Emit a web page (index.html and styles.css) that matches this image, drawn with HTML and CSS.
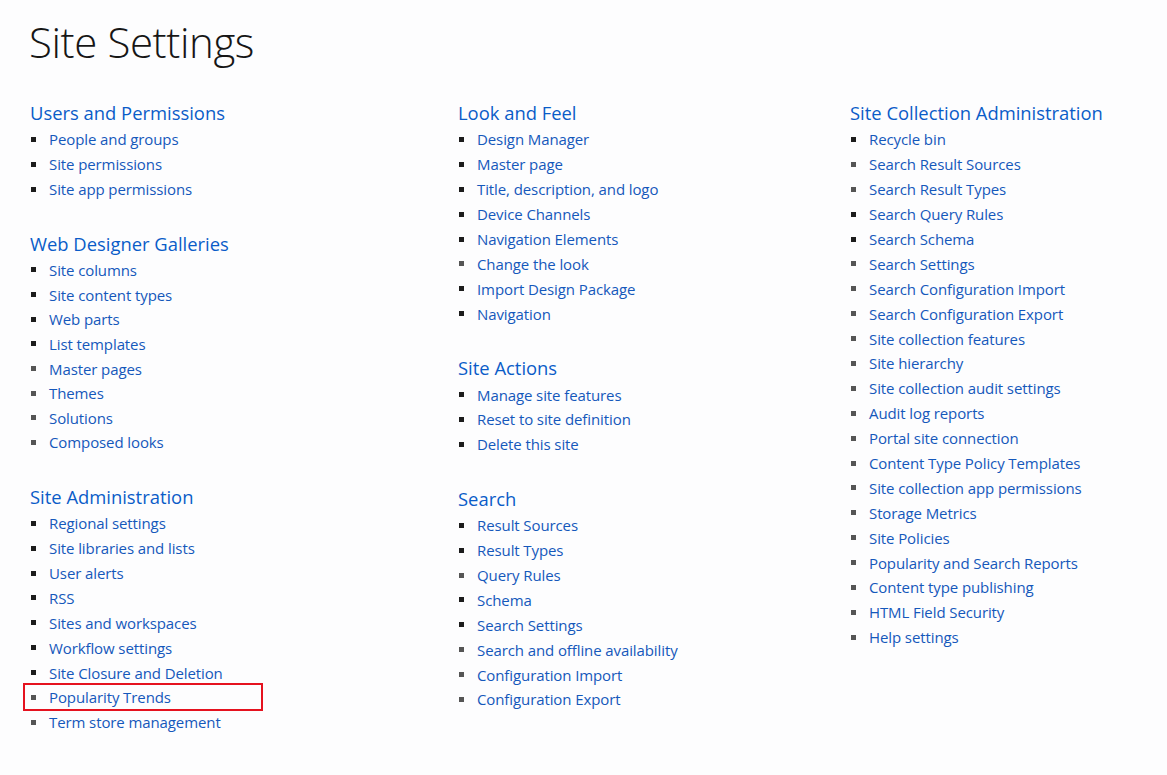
FILE: index.html
```html
<!DOCTYPE html>
<html lang="en">
<head>
<meta charset="utf-8">
<title>Site Settings</title>
<link rel="stylesheet" href="styles.css">
</head>
<body>
<div class="page">
  <h1 class="title">Site Settings</h1>
  <div class="columns">
    <div class="col col-1">
      <section class="group">
        <h2 class="group-title">Users and Permissions</h2>
        <ul class="links">
          <li><a href="#">People and groups</a></li>
          <li><a href="#">Site permissions</a></li>
          <li><a href="#">Site app permissions</a></li>
        </ul>
      </section>
      <section class="group">
        <h2 class="group-title">Web Designer Galleries</h2>
        <ul class="links tight">
          <li><a href="#">Site columns</a></li>
          <li><a href="#">Site content types</a></li>
          <li><a href="#">Web parts</a></li>
          <li><a href="#">List templates</a></li>
          <li class="dim"><a href="#">Master pages</a></li>
          <li class="dim"><a href="#">Themes</a></li>
          <li class="dim"><a href="#">Solutions</a></li>
          <li class="dim"><a href="#">Composed looks</a></li>
        </ul>
      </section>
      <section class="group">
        <h2 class="group-title">Site Administration</h2>
        <ul class="links">
          <li><a href="#">Regional settings</a></li>
          <li><a href="#">Site libraries and lists</a></li>
          <li><a href="#">User alerts</a></li>
          <li><a href="#">RSS</a></li>
          <li><a href="#">Sites and workspaces</a></li>
          <li><a href="#">Workflow settings</a></li>
          <li><a href="#">Site Closure and Deletion</a></li>
          <li class="dim highlighted"><a href="#">Popularity Trends</a></li>
          <li class="dim"><a href="#">Term store management</a></li>
        </ul>
      </section>
    </div>
    <div class="col col-2">
      <section class="group">
        <h2 class="group-title">Look and Feel</h2>
        <ul class="links">
          <li><a href="#">Design Manager</a></li>
          <li><a href="#">Master page</a></li>
          <li><a href="#">Title, description, and logo</a></li>
          <li><a href="#">Device Channels</a></li>
          <li><a href="#">Navigation Elements</a></li>
          <li class="dim"><a href="#">Change the look</a></li>
          <li><a href="#">Import Design Package</a></li>
          <li><a href="#">Navigation</a></li>
        </ul>
      </section>
      <section class="group">
        <h2 class="group-title">Site Actions</h2>
        <ul class="links">
          <li><a href="#">Manage site features</a></li>
          <li><a href="#">Reset to site definition</a></li>
          <li><a href="#">Delete this site</a></li>
        </ul>
      </section>
      <section class="group">
        <h2 class="group-title">Search</h2>
        <ul class="links">
          <li><a href="#">Result Sources</a></li>
          <li><a href="#">Result Types</a></li>
          <li class="dim"><a href="#">Query Rules</a></li>
          <li><a href="#">Schema</a></li>
          <li><a href="#">Search Settings</a></li>
          <li class="dim"><a href="#">Search and offline availability</a></li>
          <li class="dim"><a href="#">Configuration Import</a></li>
          <li class="dim"><a href="#">Configuration Export</a></li>
        </ul>
      </section>
    </div>
    <div class="col col-3">
      <section class="group">
        <h2 class="group-title">Site Collection Administration</h2>
        <ul class="links">
          <li><a href="#">Recycle bin</a></li>
          <li class="dim"><a href="#">Search Result Sources</a></li>
          <li class="dim"><a href="#">Search Result Types</a></li>
          <li><a href="#">Search Query Rules</a></li>
          <li><a href="#">Search Schema</a></li>
          <li class="dim"><a href="#">Search Settings</a></li>
          <li class="dim"><a href="#">Search Configuration Import</a></li>
          <li class="dim"><a href="#">Search Configuration Export</a></li>
          <li class="dim"><a href="#">Site collection features</a></li>
          <li class="dim"><a href="#">Site hierarchy</a></li>
          <li class="dim"><a href="#">Site collection audit settings</a></li>
          <li class="dim"><a href="#">Audit log reports</a></li>
          <li class="dim"><a href="#">Portal site connection</a></li>
          <li class="dim"><a href="#">Content Type Policy Templates</a></li>
          <li class="dim"><a href="#">Site collection app permissions</a></li>
          <li class="dim"><a href="#">Storage Metrics</a></li>
          <li class="dim"><a href="#">Site Policies</a></li>
          <li class="dim"><a href="#">Popularity and Search Reports</a></li>
          <li class="dim"><a href="#">Content type publishing</a></li>
          <li class="dim"><a href="#">HTML Field Security</a></li>
          <li class="dim"><a href="#">Help settings</a></li>
        </ul>
      </section>
    </div>
  </div>
</div>
</body>
</html>
```

FILE: styles.css
```css
html, body {
  margin: 0;
  padding: 0;
  background: #fdfdfe;
}

body {
  font-family: "Open Sans", "Noto Sans", "Liberation Sans", sans-serif;
  color: #222;
  width: 1167px;
  height: 775px;
  overflow: hidden;
}

.page {
  padding: 12px 0 0 29px;
}

.title {
  margin: 0;
  font-weight: 300;
  font-size: 42px;
  line-height: 60px;
  color: #161616;
  letter-spacing: -0.4px;
}

.columns {
  display: grid;
  grid-template-columns: 428px 392px 1fr;
  margin-top: 27px;
}

.group {
  margin-bottom: 28px;
}

.group-title {
  margin: 0 0 0 1px;
  font-size: 18.4px;
  font-weight: 400;
  line-height: 28px;
  color: #0a5cc8;
}

.links {
  list-style: none;
  margin: 0;
  padding: 0;
}

.links li {
  position: relative;
  display: flex;
  align-items: center;
  gap: 13px;
  height: 24.9px;
  font-size: 15px;
  letter-spacing: -0.1px;
}

.links.tight li {
  height: 24.65px;
}

.links li::before {
  content: "";
  width: 5px;
  height: 5px;
  margin-left: 2px;
  background: #1c1c1c;
  flex: none;
}

.links li.dim::before {
  background: #555;
}

.links a {
  color: #1558bb;
  text-decoration: none;
  white-space: nowrap;
}

.links li.highlighted::after {
  content: "";
  position: absolute;
  left: -6px;
  top: -2px;
  width: 236px;
  height: 24px;
  border: 2px solid #e5121f;
}
```
